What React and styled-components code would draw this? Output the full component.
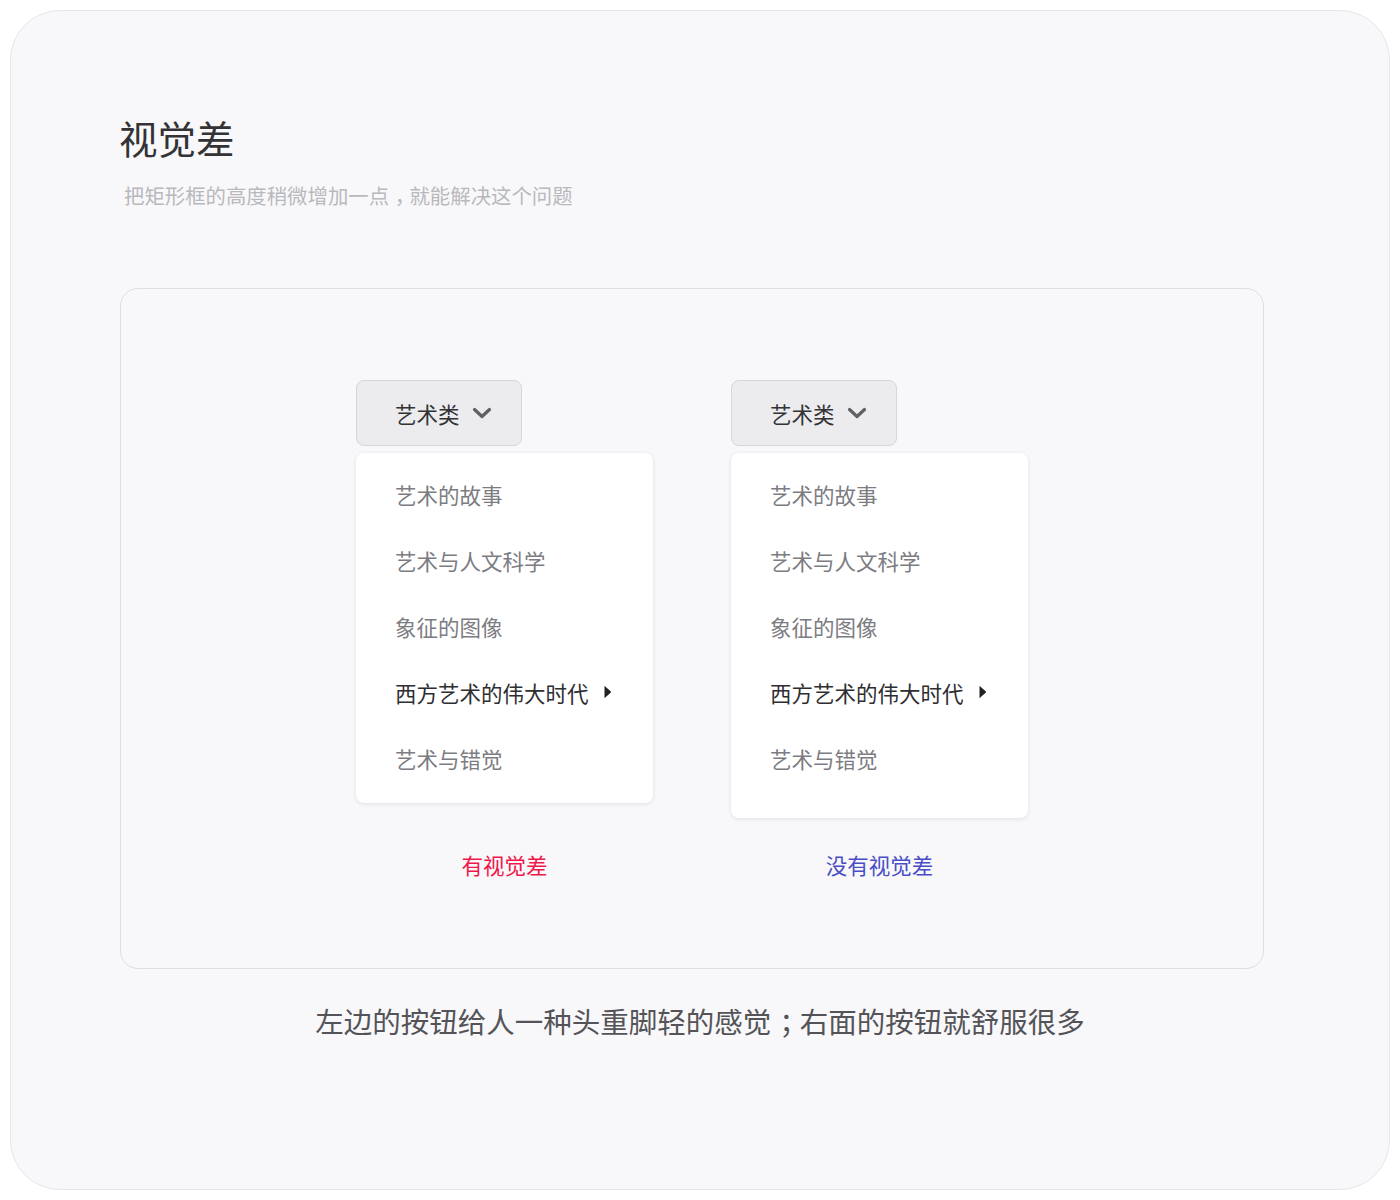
import React from "react";
import styled, { createGlobalStyle } from "styled-components";

const Global = createGlobalStyle`
  html, body { margin: 0; padding: 0; background: #ffffff; }
  body {
    font-family: "Noto Sans CJK SC", "Noto Sans", sans-serif;
    -webkit-font-smoothing: antialiased;
  }
`;

const Page = styled.div`
  padding: 10px;
  width: 1400px;
  height: 1200px;
  box-sizing: border-box;
`;

const Card = styled.div`
  box-sizing: border-box;
  height: 1180px;
  background: #f8f8fa;
  border: 1px solid #e6e6ea;
  border-radius: 50px;
  padding: 98px 125px 0 109px;
  display: flex;
  flex-direction: column;
`;

const Title = styled.h1`
  margin: 0 0 0 -1px;
  font-size: 38.5px;
  font-weight: 400;
  line-height: 56px;
  color: #333336;
`;

const Subtitle = styled.p`
  margin: 16px 0 0 4px;
  font-size: 20.4px;
  line-height: 28px;
  color: #b9b9bd;
`;

/* full-width punctuation: half-width glyph advance plus air on both sides */
const Punct = styled.span`
  display: inline-block;
  padding: 0 0.22em 0 0.28em;
  font-feature-settings: "halt";
  white-space: nowrap;
`;

const Panel = styled.div`
  box-sizing: border-box;
  margin-top: 79px;
  height: 681px;
  border: 1.5px solid #dedee2;
  border-radius: 18px;
  display: flex;
  justify-content: center;
  gap: 78px;
  padding-top: 91px;
`;

const Column = styled.div`
  display: flex;
  flex-direction: column;
  width: 297px;
`;

const Trigger = styled.button`
  box-sizing: border-box;
  width: 166px;
  height: 66px;
  background: #ececef;
  border: 1px solid #d6d6da;
  border-radius: 8px;
  display: flex;
  align-items: center;
  padding: 0 0 0 38px;
  gap: 12px;
  font-family: inherit;
  font-size: 21.5px;
  color: #333336;
  cursor: pointer;
`;

const Menu = styled.ul`
  box-sizing: border-box;
  list-style: none;
  margin: 7px 0 0 0;
  padding: 8px 0 ${(p) => p.$bottom}px 0;
  background: #ffffff;
  border-radius: 8px;
  box-shadow: 0 1px 4px rgba(0, 0, 0, 0.1);
`;

const Item = styled.li`
  height: 66px;
  display: flex;
  align-items: center;
  gap: 14px;
  padding-left: 39px;
  font-size: 21.5px;
  color: ${(p) => (p.$active ? "#2e2e31" : "#7c7c82")};
`;

const Label = styled.div`
  margin-top: ${(p) => p.$top}px;
  text-align: center;
  font-size: 21.5px;
  line-height: 30px;
  color: ${(p) => p.$color};
`;

const Caption = styled.p`
  margin: 34px -16px 0 0;
  text-align: center;
  font-size: 28.5px;
  line-height: 36px;
  color: #545458;
`;

const Chevron = () => (
  <svg width="20" height="14" viewBox="0 0 20 14" fill="none">
    <path
      d="M2.5 3.5 L10 10.5 L17.5 3.5"
      stroke="#606064"
      strokeWidth="3.2"
      strokeLinecap="round"
      strokeLinejoin="round"
    />
  </svg>
);

const Caret = () => (
  <svg width="9" height="14" viewBox="0 0 9 14">
    <path d="M1.5 1.5 Q1 0.8 2 1.3 L7.6 6.2 Q8.5 7 7.6 7.8 L2 12.7 Q1 13.2 1.5 12.5 Z" fill="#222225" />
  </svg>
);

const items = ["艺术的故事", "艺术与人文科学", "象征的图像", "西方艺术的伟大时代", "艺术与错觉"];

const Dropdown = ({ bottom, label, color, labelTop }) => (
  <Column>
    <Trigger>
      艺术类
      <Chevron />
    </Trigger>
    <Menu $bottom={bottom}>
      {items.map((t, i) => (
        <Item key={t} $active={i === 3}>
          {t}
          {i === 3 && <Caret />}
        </Item>
      ))}
    </Menu>
    <Label $color={color} $top={labelTop}>
      {label}
    </Label>
  </Column>
);

export default function App() {
  return (
    <>
      <Global />
      <Page>
        <Card>
          <Title>视觉差</Title>
          <Subtitle>
            把矩形框的高度稍微增加一点<Punct>，</Punct>就能解决这个问题
          </Subtitle>
          <Panel>
            <Dropdown bottom={12} label="有视觉差" color="#f0174a" labelTop={47} />
            <Dropdown bottom={27} label="没有视觉差" color="#4a4ec6" labelTop={32} />
          </Panel>
          <Caption>
            左边的按钮给人一种头重脚轻的感觉<Punct>；</Punct>右面的按钮就舒服很多
          </Caption>
        </Card>
      </Page>
    </>
  );
}
